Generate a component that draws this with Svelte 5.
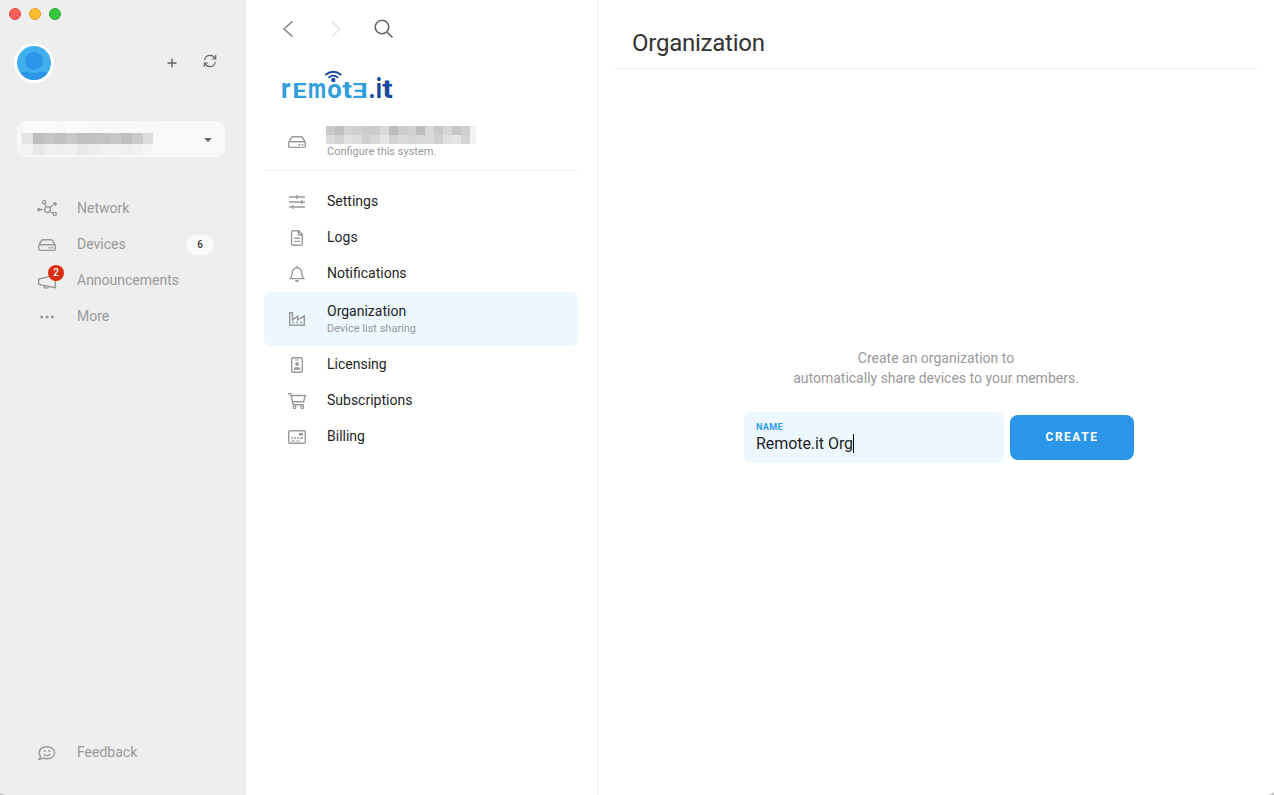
<script>
  const sideItems = [
    { icon: 'network', label: 'Network' },
    { icon: 'drive', label: 'Devices', count: 6 },
    { icon: 'horn', label: 'Announcements', alert: 2 },
    { icon: 'more', label: 'More' }
  ];
  const menu = [
    { icon: 'sliders', label: 'Settings' },
    { icon: 'file', label: 'Logs' },
    { icon: 'bell', label: 'Notifications' },
    { icon: 'factory', label: 'Organization', sub: 'Device list sharing', active: true },
    { icon: 'badge', label: 'Licensing' },
    { icon: 'cart', label: 'Subscriptions' },
    { icon: 'card', label: 'Billing' }
  ];
  const selectRows = [
    { h: 12, c: ['#f4f4f4', '#fafafa', '#fcfcfc', '#fafafa', '#f8f8f8', '#fafafa', '#fafafa', '#f9f9f9', '#f9f9f9', '#f9f9f9', '#f9f9f9', '#f9f9f9', '#f8f8f8'] },
    { h: 11, c: ['#f4f4f4', '#e3e3e3', '#bfbfbf', '#c5c5c5', '#c0c0c0', '#c8c8c8', '#bfbfbf', '#c1c1c1', '#c2c2c2', '#c8c8c8', '#bebebe', '#cacaca', '#dddddd'] },
    { h: 11, c: ['#f4f4f4', '#f3f3f3', '#e8e8e8', '#efefef', '#eeeeee', '#f0f0f0', '#e9e9e9', '#ededed', '#f1f1f1', '#f1f1f1', '#eeeeee', '#f0f0f0', '#f5f5f5'] }
  ];
  const nameRows = [
    ['#c9c9c9', '#c1c1c1', '#d3d3d3', '#cfcfcf', '#cdcdcd', '#cbcbcb', '#dbdbdb', '#bdbdbd', '#cccccc', '#d1d1d1', '#bcbcbc', '#d8d8d8', '#c9c9c9', '#d8d8d8', '#c5c5c5', '#cecece', '#f4f4f4'],
    ['#dcdcdc', '#d2d2d2', '#e1e1e1', '#dddddd', '#d0d0d0', '#d9d9d9', '#e5e5e5', '#d3d3d3', '#dadada', '#d6d6d6', '#d8d8d8', '#dadada', '#d0d0d0', '#e1e1e1', '#e5e5e5', '#d4d4d4', '#f2f2f2']
  ];
  let name = 'Remote.it Org';
</script>

{#snippet icon(kind)}
  <svg class="icon" viewBox="0 0 22 20" width="22" height="20">
    {#if kind === 'network'}
      <circle cx="11.6" cy="10.6" r="2.9" />
      <circle cx="8.2" cy="3.2" r="1.6" /><circle cx="18.8" cy="15" r="1.6" />
      <path d="M9 4.8l1.3 3M14 12.4l3.2 1.9M14 8.4l3-2.2M5 10.6h2.4" stroke-width="1.2" />
      <circle class="fill" cx="19" cy="4.8" r="1.9" /><circle class="fill" cx="3" cy="10.6" r="1.9" />
    {:else if kind === 'drive'}
      <path d="M2.8 10.2L5.4 5.6Q5.9 4.7 7 4.7h8q1.1 0 1.6.9l2.6 4.6M4.2 9.8h13.6q1.5 0 1.5 1.5v3q0 1.1-1.1 1.1H3.8q-1.1 0-1.1-1.1v-3q0-1.5 1.5-1.5z" />
      <circle class="fill" cx="13.4" cy="12.7" r=".95" /><circle class="fill" cx="16.4" cy="12.7" r=".95" />
    {:else if kind === 'horn'}
      <path d="M2.7 8.1v5.3L19.3 16.7V4.3zM7.6 14.5c.2 3 4 3.5 5 1" />
    {:else if kind === 'more'}
      <circle class="fill" cx="5.7" cy="10" r="1.5" /><circle class="fill" cx="11" cy="10" r="1.5" /><circle class="fill" cx="16.3" cy="10" r="1.5" />
    {:else if kind === 'sliders'}
      <path d="M3 5h16M3 10h16M3 15h16M10.9 3v4M15.8 8v4M6.9 13v4" />
    {:else if kind === 'file'}
      <path d="M6.5 2.7h6.2l3.6 3.6v9.6q0 1.4-1.4 1.4H7q-1.4 0-1.4-1.4V4q0-1.3 1.3-1.3M12.3 3v3.8h3.8M8.2 10.2h5.6M8.2 13.4h5.6" />
    {:else if kind === 'bell'}
      <path d="M11 2v1.8M4.3 14.6c1.8-1.8 2-3 2-6A4.7 4.7 0 0 1 11 3.8a4.7 4.7 0 0 1 4.7 4.8c0 3 .2 4.2 2 6z" />
      <path class="fill" d="M9 16h4a2 2 0 0 1-4 0z" />
    {:else if kind === 'factory'}
      <path d="M3.7 3.7h2.8v7.2l5.1-3.7v3.7l6.7-3.9v9.3H3.7z" />
      <path d="M6 13.5h1.8M10.2 13.5H12M14.4 13.5h1.8" />
    {:else if kind === 'badge'}
      <rect x="5.7" y="2.7" width="10.6" height="14.6" rx="1.4" /><path d="M9 5h4" stroke-width="1" />
      <circle class="fill" cx="11" cy="9" r="1.9" /><path class="fill" d="M7.7 14.8c0-2.2 1-2.8 3.3-2.8s3.3.6 3.3 2.8z" />
    {:else if kind === 'cart'}
      <path d="M2 2.7h2.6l2.5 11h10.8M5 4.5h14.3l-1.7 6.3H6.5" />
      <circle cx="8.5" cy="16.2" r="1.4" stroke-width="1.2" /><circle cx="16.2" cy="16.2" r="1.4" stroke-width="1.2" />
    {:else if kind === 'card'}
      <rect x="2.7" y="3.7" width="16.6" height="12.6" rx="1.2" />
      <path class="fill" d="M13 6h4v2.5h-4z" /><path d="M5 11h2M8.1 11h2M11.2 11h2M14.3 11h2.6" stroke-width="1.7" /><path d="M5 14h4M10.2 14h3.6" stroke-width="1" />
    {:else if kind === 'chat'}
      <path d="M4.3 13.2C1.7 9.6 3.5 3.7 11 3.7c4.6 0 7.6 2.6 7.6 6s-3 6-7.6 6c-1.6 0-3-.3-4-.9-1 .9-2.4 1.4-3.8 1.4.7-.7 1.2-1.7 1.1-3z" />
      <path d="M7.7 11c1.4 2.4 5.2 2.4 6.6 0" /><circle class="fill" cx="8.8" cy="8" r="1" /><circle class="fill" cx="13.2" cy="8" r="1" />
    {/if}
  </svg>
{/snippet}

<div class="window">
  <aside>
    <div class="lights"><i class="red"></i><i class="amber"></i><i class="green"></i></div>
    <div class="account">
      <svg class="avatar" viewBox="0 0 40 40" width="40" height="40">
        <defs><clipPath id="face"><circle cx="20" cy="20" r="17" /></clipPath></defs>
        <circle cx="20" cy="20" r="20" fill="#fff" />
        <g clip-path="url(#face)">
          <path d="M0 0h40v40H0z" fill="#40afed" /><circle cx="20" cy="17.8" r="9" fill="#2b95e9" />
          <path d="M3 33c4-4 8-5.300 11-4 4 1.700 8 1.700 12 0 3-1.300 7 0 11 4v7H3z" fill="#2b95e9" />
        </g>
      </svg>
      <span class="grow"></span>
      <svg class="plus" viewBox="0 0 10 10" width="10" height="10"><path d="M5 .5v9M.5 5h9" /></svg>
      <svg class="refresh" viewBox="0 0 14 14" width="14" height="14"><path d="M1.700 6.200A5.400 5.400 0 0 1 12 4.600M12.300 7.800A5.400 5.400 0 0 1 2 9.400M12.700 1v4H8.800M1.300 13V9h3.900" /></svg>
    </div>
    <div class="select">
      <div class="mosaic">
        {#each selectRows as r}
          <div class="strip" style="height:{r.h}px">{#each r.c as c}<b style="background:{c}"></b>{/each}</div>
        {/each}
      </div>
      <svg class="caret" viewBox="0 0 8 4" width="8" height="4"><path d="M0 0h8L4 4z" /></svg>
    </div>
    <nav>
      {#each sideItems as item}
        <div class="side">
          <span class="holder">{@render icon(item.icon)}{#if item.alert}<em>{item.alert}</em>{/if}</span>
          <span class="label">{item.label}</span>
          {#if item.count}<span class="count">{item.count}</span>{/if}
        </div>
      {/each}
    </nav>
    <div class="side feedback"><span class="holder">{@render icon('chat')}</span><span class="label">Feedback</span></div>
  </aside>

  <section class="middle">
    <div class="tools">
      <svg viewBox="0 0 12 18" width="12" height="18"><path d="M10.500 1.300L2 9l8.500 7.700" stroke="#8c8c8c" /></svg>
      <svg class="next" viewBox="0 0 12 18" width="12" height="18"><path d="M1.500 1.300L10 9l-8.500 7.700" stroke="#e6e6e6" /></svg>
      <svg class="find" viewBox="0 0 20 20" width="20" height="20"><circle cx="8" cy="8" r="6.800" stroke="#666" /><path d="M13 13l5.500 5.500" stroke="#666" /></svg>
    </div>
    <svg class="logo" viewBox="0 0 112 30" width="112" height="30">
      <g class="light">
        <text x="0" y="27.700" font-size="28" textLength="9.500" lengthAdjust="spacingAndGlyphs">r</text>
        <text x="11.400" y="27.700" font-size="21" textLength="14" lengthAdjust="spacingAndGlyphs">E</text>
        <text x="27" y="27.700" font-size="28" textLength="18" lengthAdjust="spacingAndGlyphs">m</text>
        <text x="46.300" y="27.700" font-size="26.500" textLength="14.500" lengthAdjust="spacingAndGlyphs">o</text>
        <text x="61.500" y="27.700" font-size="24" textLength="9.500" lengthAdjust="spacingAndGlyphs">t</text>
        <text x="-86.700" y="27.700" font-size="21" textLength="15" lengthAdjust="spacingAndGlyphs" transform="scale(-1 1)">E</text>
      </g>
      <g class="dark">
        <text x="87.500" y="27.700" font-size="28" textLength="7" lengthAdjust="spacingAndGlyphs">.</text>
        <text x="94.800" y="27.700" font-size="27" textLength="6.200" lengthAdjust="spacingAndGlyphs">i</text>
        <text x="101.300" y="27.700" font-size="25" textLength="10.500" lengthAdjust="spacingAndGlyphs">t</text>
        <circle cx="52.300" cy="10" r="2.200" />
        <path d="M44.300 5Q52.300-1.400 60.300 5M47.400 7.800Q52.300 3.400 57.200 7.800" />
      </g>
    </svg>
    <div class="system">
      {@render icon('drive')}
      <div class="host">
        <div class="mosaic">
          {#each nameRows as r}<div class="strip nine">{#each r as c}<b style="background:{c}"></b>{/each}</div>{/each}
        </div>
        <small>Configure this system.</small>
      </div>
    </div>
    <nav class="menu">
      {#each menu as item}
        <div class="row" class:active={item.active}>
          {@render icon(item.icon)}
          <div class="words"><span>{item.label}</span>{#if item.sub}<small>{item.sub}</small>{/if}</div>
        </div>
      {/each}
    </nav>
  </section>

  <main>
    <h1>Organization</h1>
    <div class="body">
      <p>Create an organization to<br />automatically share devices to your members.</p>
      <div class="form">
        <div class="field"><label for="org">NAME</label><div class="value" id="org">{name}<i></i></div></div>
        <button>CREATE</button>
      </div>
    </div>
  </main>
  <svg class="corner left" viewBox="0 0 10 10" width="10" height="10"><path d="M0 8Q2 9.500 6 10H0z" /></svg>
  <svg class="corner right" viewBox="0 0 10 10" width="10" height="10"><path d="M10 7Q8 9.500 3 10h7z" /></svg>
</div>

<style>
  :global(body) { margin: 0; background: #fff; }
  * { box-sizing: border-box; }
  .window { position: relative; display: flex; width: 1274px; height: 795px; overflow: hidden; font-family: Roboto, sans-serif; font-size: 14px; color: #1f1f1f; background: #fff; }
  svg { display: block; flex: none; fill: none; }
  .icon { stroke: #999; stroke-width: 1.4; }
  .icon .fill { fill: #999; stroke: none; }
  .grow { flex: 1; }
  .corner { position: absolute; bottom: 0; fill: #bbb; }
  .left { left: 0; }
  .right { right: 0; }

  aside { width: 246px; flex: none; background: #eee; display: flex; flex-direction: column; }
  .lights { display: flex; gap: 8px; padding: 8px 9px 0; }
  .lights i { width: 12px; height: 12px; border-radius: 50%; border: 1px solid; }
  .red { background: #fc605b; border-color: #e2453f !important; }
  .amber { background: #fdbc2e; border-color: #dfa023 !important; }
  .green { background: #34c83f; border-color: #23a92c !important; }
  .account { display: flex; align-items: center; margin-top: 23px; padding: 0 29px 0 14px; height: 40px; }
  .plus { stroke: #666; stroke-width: 1.4; margin-right: 26px; }
  .refresh { stroke: #666; stroke-width: 1.2; margin-bottom: 4px; }
  .select { margin: 38px 21px 0 17px; height: 36px; border-radius: 9px; background: #f9f9f9; display: flex; align-items: center; justify-content: space-between; padding-right: 13px; overflow: hidden; }
  .select .mosaic { padding-left: 3px; margin-top: -2px; }
  .select .strip b:first-child { width: 2px; }
  .select .strip b:last-child { width: 10px; }
  .strip { display: flex; }
  .strip b { width: 11px; height: 100%; }
  .caret { fill: #666; margin-top: 2px; }
  aside nav { margin-top: 33px; }
  .side { display: flex; align-items: center; height: 36px; padding: 0 32px 0 36px; color: #999; }
  .holder { position: relative; margin-right: 19px; top: 1px; }
  .holder em { position: absolute; left: 12px; top: -6px; width: 16px; height: 16px; border-radius: 50%; background: #dc2c10; color: #fff; font-style: normal; font-size: 10px; line-height: 16px; text-align: center; font-weight: 500; }
  .label { flex: 1; }
  .count { width: 28px; height: 20px; border-radius: 10px; background: #fafafa; color: #333; font-size: 10px; font-weight: 500; line-height: 20px; text-align: center; margin-top: 2px; }
  .feedback { margin-top: auto; margin-bottom: 25px; }

  .middle { width: 352px; flex: none; border-right: 1px solid #eee; padding: 0 19px 0 18px; }
  .tools { display: flex; align-items: center; height: 20px; margin: 19px 0 0 18px; stroke-width: 1.6; }
  .next { margin-left: 36px; }
  .find { margin-left: 32px; }
  .logo { margin: 31px 0 0 17px; font-family: Roboto, sans-serif; font-weight: 700; overflow: visible; }
  .light { fill: #2f9edb; }
  .dark { fill: #174a9c; }
  .logo path { fill: none; stroke: #174a9c; stroke-width: 1.8; }
  .system { display: flex; align-items: center; height: 71px; padding-left: 22px; border-bottom: 1px solid #eee; }
  .system .icon { margin-top: 14px; }
  .host { margin: 15px 0 0 18px; }
  .host .strip { height: 9px; }
  .nine b { width: 9px; }
  .nine b:last-child { width: 6px; }
  small { display: block; font-size: 11px; line-height: 14px; color: #999; }
  .host small { margin: 1px 0 0 1px; }
  .menu { margin-top: 12px; }
  .row { display: flex; align-items: center; height: 36px; padding-left: 22px; border-radius: 7px; }
  .row .icon { position: relative; top: 1px; }
  .row.active { height: 54px; margin-top: 1px; background: #ecf7fe; }
  .row.active .icon { top: 0; }
  .words { margin-left: 19px; }
  .words span { display: block; line-height: 20px; }
  .active .words span { margin-top: -1px; margin-bottom: 1px; }

  main { flex: 1; display: flex; flex-direction: column; }
  h1 { margin: 0 16px 0 17px; padding: 18px 0 0 17px; height: 69px; font-size: 24px; font-weight: 400; line-height: 50px; letter-spacing: -0.24px; border-bottom: 1px solid #eee; color: #333; }
  .body { display: flex; flex-direction: column; align-items: center; padding-top: 279px; }
  p { margin: 0; line-height: 20px; color: #999; text-align: center; }
  .form { display: flex; align-items: center; gap: 6px; margin-top: 24px; padding-left: 6px; }
  .field { width: 260px; height: 51px; border-radius: 8px; background: #ecf7fe; padding: 10px 12px 0; }
  label { display: block; font-size: 9px; line-height: 11px; font-weight: 700; color: #2b9fe8; letter-spacing: 0.35px; }
  .value { display: flex; align-items: center; font-size: 16px; line-height: 21px; letter-spacing: -0.06px; }
  .value i { width: 1px; height: 19px; background: #000; }
  button { width: 124px; height: 45px; border: 0; border-radius: 8px; background: #2b95e9; color: #fff; font: 700 12px Roboto, sans-serif; letter-spacing: 1.5px; padding: 0 0 2px; }
</style>
